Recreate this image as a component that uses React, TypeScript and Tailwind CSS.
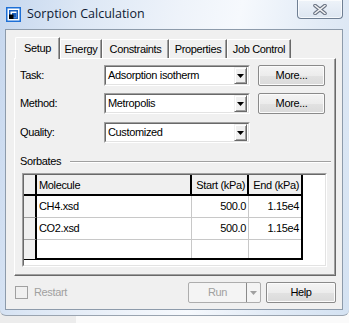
import React from "react";

const F = { fontFamily: '"Liberation Sans", Arial, sans-serif' } as const;

function DropArrow({ color = "#000" }: { color?: string }) {
  return (
    <svg width="7" height="4" viewBox="0 0 7 4">
      <path d="M0 0 H7 L3.5 4 Z" fill={color} />
    </svg>
  );
}

function Combo({ value }: { value: string }) {
  return (
    <div className="flex h-[21px] w-[146px] border border-t-[#a0a0a0] border-l-[#a0a0a0] border-b-white border-r-white">
      <div className="flex flex-1 items-center border border-t-[#696969] border-l-[#696969] border-b-[#e3e3e3] border-r-[#e3e3e3] bg-white pl-[2px] pr-[1px]">
        <span className="flex-1 text-[11px] leading-none text-black">{value}</span>
        <div className="flex h-[17px] w-[13px] items-center justify-center border border-t-[#f0f0f0] border-l-[#f0f0f0] border-b-[#696969] border-r-[#696969] bg-[#f0f0f0] shadow-[inset_1px_1px_0_#ffffff,inset_-1px_-1px_0_#a0a0a0]">
          <DropArrow />
        </div>
      </div>
    </div>
  );
}

function Btn({ children, w, className = "" }: { children: React.ReactNode; w: string; className?: string }) {
  return (
    <div
      className={`flex h-[21px] ${w} items-center justify-center rounded-[2px] border border-[#8a8a8a] bg-[linear-gradient(#f4f4f4,#ececec_50%,#e2e2e2_50%,#dadada)] shadow-[inset_0_0_0_1px_#fbfbfb] text-[11px] leading-none text-black ${className}`}
    >
      {children}
    </div>
  );
}

function Tab({ label, w, selected = false }: { label: string; w: string; selected?: boolean }) {
  return (
    <div
      className={`relative flex ${w} items-start justify-center border-l border-t border-l-white border-t-white border-r border-r-[#696969] bg-[#f0f0f0] shadow-[inset_-1px_0_0_#a0a0a0] text-[11px] leading-none text-black ${
        selected ? "z-10 -mb-px h-[22px] pt-[5px] rounded-tl-[2px]" : "h-[19px] pt-[4px] rounded-tl-[1px]"
      }`}
    >
      {label}
    </div>
  );
}

function CloseGlyph() {
  return (
    <svg width="14" height="11" viewBox="0 0 14 11">
      <path d="M2 1.5 L12 9.5 M12 1.5 L2 9.5" stroke="#6a7383" strokeWidth="3.6" strokeLinecap="round" />
      <path d="M2 1.5 L12 9.5 M12 1.5 L2 9.5" stroke="#f4f4f4" strokeWidth="1.6" strokeLinecap="round" />
    </svg>
  );
}

function AppIcon() {
  return (
    <svg width="15" height="15" viewBox="0 0 15 15">
      <rect x="0" y="0" width="15" height="15" fill="#1d6fd6" />
      <rect x="1.5" y="1.5" width="12" height="12" fill="#ffffff" />
      <rect x="3" y="3" width="9" height="9" fill="#1a5fbf" />
      <rect x="4.5" y="4.5" width="6" height="6" fill="#ffffff" />
      <rect x="6" y="6" width="4.5" height="4.5" fill="#1a5fbf" />
      <rect x="3" y="7.5" width="4.5" height="4.5" fill="#000000" />
    </svg>
  );
}

export default function App() {
  const rows = [
    { m: "CH4.xsd", s: "500.0", e: "1.15e4" },
    { m: "CO2.xsd", s: "500.0", e: "1.15e4" },
    { m: "", s: "", e: "" },
  ];
  return (
    <div className="h-[323px] w-[349px] overflow-hidden bg-[linear-gradient(90deg,#ececec_0,#ececec_76px,#fafafa_76px)] tracking-[-0.35px]" style={F}>
      <div className="h-[316px] w-[349px] rounded-b-[6px] border-b border-[#9aa4b0] bg-[linear-gradient(100deg,#c6d7ee_0%,#dce7f5_20%,#eef3fa_45%,#f6f9fd_60%,#e2ebf6_80%,#d4e2f2_100%)]">
        {/* Title bar */}
        <div className="flex h-[29px] pl-[6px] pr-[6px]">
          <div className="flex flex-1 items-center gap-[6px]">
            <AppIcon />
            <span className="pb-[1px] text-[12.5px] leading-none tracking-normal text-[#0e1a33]" style={{ fontFamily: '"Open Sans", "Noto Sans", sans-serif' }}>
              Sorption Calculation
            </span>
          </div>
          <div className="flex h-[19px] w-[46px] items-center justify-center self-start rounded-b-[4px] border border-t-0 border-[#6f7f93] bg-[linear-gradient(#eef3f9,#dde6f1)] shadow-[inset_0_0_0_1px_rgba(255,255,255,0.7)]">
            <CloseGlyph />
          </div>
        </div>
        {/* Client area */}
        <div className="ml-[5px] h-[281px] w-[338px] border border-[#8d9bab] bg-[#f0f0f0] pt-[7px]">
          {/* tabs */}
          <div className="ml-[9px] flex items-end">
            <Tab label="Setup" w="w-[45px]" selected />
            <Tab label="Energy" w="w-[42px]" />
            <Tab label="Constraints" w="w-[67px]" />
            <Tab label="Properties" w="w-[58px]" />
            <Tab label="Job Control" w="w-[64px]" />
          </div>
          {/* panel */}
          <div className="ml-[8px] h-[218px] w-[322px] border border-t-white border-l-white border-b-[#696969] border-r-[#696969] shadow-[inset_-1px_-1px_0_#a0a0a0] pl-[5px] pt-[6px]">
            <div className="flex items-center">
              <span className="w-[84px] text-[11px] leading-none">Task:</span>
              <Combo value="Adsorption isotherm" />
              <Btn w="w-[67px]" className="ml-[8px]">More...</Btn>
            </div>
            <div className="mt-[7px] flex items-center">
              <span className="w-[84px] text-[11px] leading-none">Method:</span>
              <Combo value="Metropolis" />
              <Btn w="w-[67px]" className="ml-[8px]">More...</Btn>
            </div>
            <div className="mt-[8px] flex items-center">
              <span className="w-[84px] text-[11px] leading-none">Quality:</span>
              <Combo value="Customized" />
            </div>
            {/* Sorbates group */}
            <div className="mt-[13px] flex items-center">
              <span className="text-[11px] leading-none">Sorbates</span>
              <div className="ml-[9px] mr-[4px] h-[2px] flex-1 border-t border-b border-t-[#a0a0a0] border-b-white" />
            </div>
            {/* grid */}
            <div className="ml-[2px] mt-[6px] h-[94px] w-[305px] border border-t-[#a0a0a0] border-l-[#a0a0a0] border-b-white border-r-white">
              <div className="h-full w-full border border-t-[#696969] border-l-[#696969] border-b-[#e3e3e3] border-r-[#e3e3e3] bg-white">
                <div className="w-[279px] border-b-2 border-r-2 border-black">
                  {/* header */}
                  <div className="flex h-[21px] border-b-2 border-black bg-[#f0f0f0] text-[11px] leading-none">
                    <div className="w-[13px] border-r-2 border-black" />
                    <div className="flex w-[155px] items-center border-r-2 border-black pl-[2px] pt-[1px]">Molecule</div>
                    <div className="flex w-[57px] items-center justify-end border-r-2 border-black pr-[2px] pt-[1px]">Start (kPa)</div>
                    <div className="flex flex-1 items-center justify-end pr-[2px] pt-[1px]">End (kPa)</div>
                  </div>
                  {rows.map((r, i) => (
                    <div
                      key={i}
                      className={`flex text-[11px] leading-none ${i < 2 ? "h-[22px] border-b border-[#c8c8c8]" : "h-[18px]"}`}
                    >
                      <div className={`-mb-px w-[13px] border-r-2 border-black bg-[#f0f0f0] ${i < 2 ? "border-b border-b-[#a0a0a0]" : ""}`} />
                      <div className="flex w-[155px] items-center border-r border-[#c8c8c8] pl-[2px]">{r.m}</div>
                      <div className="flex w-[57px] items-center justify-end border-r border-[#c8c8c8] pr-[2px]">{r.s}</div>
                      <div className="flex flex-1 items-center justify-end pr-[2px]">{r.e}</div>
                    </div>
                  ))}
                </div>
              </div>
            </div>
          </div>
          {/* bottom row */}
          <div className="mt-[6px] flex items-center pl-[9px] pr-[6px]">
            <div className="h-[13px] w-[13px] border border-[#a0a0a0] bg-[#f0f0f0]" />
            <span className="ml-[6px] flex-1 text-[11px] leading-none text-[#a0a0a0]">Restart</span>
            <div className="flex h-[21px] w-[73px] rounded-[2px] border border-[#adadad] bg-[#f4f4f4]">
              <div className="flex w-[58px] items-center justify-center border-r border-[#8a8a8a] text-[11px] leading-none text-[#a0a0a0]">Run</div>
              <div className="flex flex-1 items-center justify-center">
                <DropArrow color="#a0a0a0" />
              </div>
            </div>
            <Btn w="w-[70px]" className="ml-[5px]">Help</Btn>
          </div>
        </div>
      </div>
    </div>
  );
}
